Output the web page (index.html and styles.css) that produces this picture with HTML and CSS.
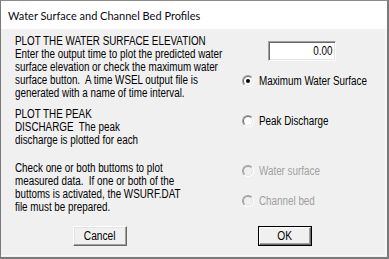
FILE: index.html
```html
<!DOCTYPE html>
<html>
<head>
<meta charset="utf-8">
<link rel="stylesheet" href="styles.css">
</head>
<body>
<div class="window">
  <div class="titlebar"><span class="title">Water Surface and Channel Bed Profiles</span></div>
  <div class="client">
    <div class="main">
      <div class="left">
        <p class="sec sec1">PLOT THE WATER SURFACE ELEVATION<br>Enter the output time to plot the predicted water<br>surface elevation or check the maximum water<br>surface button.&nbsp; A time WSEL output file is<br>generated with a name of time interval.</p>
        <p class="sec sec2">PLOT THE PEAK<br>DISCHARGE&nbsp; The peak<br>discharge is plotted for each</p>
        <p class="sec sec3">Check one or both buttoms to plot<br>measured data.&nbsp; If one or both of the<br>buttoms is activated, the WSURF.DAT<br>file must be prepared.</p>
      </div>
      <div class="right">
        <div class="field"><span class="field-text">0.00</span></div>
        <div class="opt opt-max"><span class="radio checked"><span class="radio-in"></span></span><span class="opt-label">Maximum Water Surface</span></div>
        <div class="opt opt-peak"><span class="radio"><span class="radio-in"></span></span><span class="opt-label">Peak Discharge</span></div>
        <div class="opt opt-water disabled"><span class="radio"><span class="radio-in"></span></span><span class="opt-label">Water surface</span></div>
        <div class="opt opt-bed disabled"><span class="radio"><span class="radio-in"></span></span><span class="opt-label">Channel bed</span></div>
      </div>
    </div>
    <div class="footer">
      <div class="btn"><span class="btn-text">Cancel</span></div>
      <div class="btn default"><span class="btn-in"><span class="btn-text">OK</span></span></div>
    </div>
  </div>
</div>
</body>
</html>
```
FILE: styles.css
```css
html, body {
  margin: 0;
  padding: 0;
  background: #f0f0f0;
}
.window {
  width: 389px;
  height: 259px;
  box-sizing: border-box;
  border-left: 1px solid #7a7a7a;
  border-top: 1px solid #8a8a8a;
  border-right: 2px solid #7a7a7a;
  border-bottom: 2px solid #7a7a7a;
  display: flex;
  flex-direction: column;
  background: #f0f0f0;
  overflow: hidden;
}
.titlebar {
  height: 28px;
  flex: none;
  background: #ffffff;
  display: flex;
  align-items: center;
  padding-left: 7px;
}
.title {
  font-family: Lato, "Noto Sans", sans-serif;
  font-size: 11px;
  color: #0a0a14;
}
.client {
  flex: 1;
  display: flex;
  flex-direction: column;
  font-family: "Liberation Sans", Arial, sans-serif;
  font-size: 12px;
  color: #000;
  border-right: 1px solid #fafafa;
  border-bottom: 1px solid #fafafa;
  margin-right: 1px;
  margin-bottom: 1px;
}
.main {
  flex: 1;
  display: grid;
  grid-template-columns: 241px 1fr;
}
.left {
  padding-left: 14px;
  padding-top: 6px;
}
.sec {
  margin: 0;
  line-height: 13px;
  white-space: nowrap;
  transform: scaleX(0.82);
  transform-origin: left top;
}
.sec2 { margin-top: 8px; }
.sec3 { margin-top: 15px; }
.right {
  display: flex;
  flex-direction: column;
  align-items: flex-start;
  padding-top: 12px;
}
.field {
  margin-left: 26px;
  width: 68px;
  height: 20px;
  box-sizing: border-box;
  background: #fff;
  border: 1px solid;
  border-color: #a0a0a0 #ffffff #ffffff #a0a0a0;
  box-shadow: inset 1px 1px 0 #696969, inset -1px -1px 0 #e3e3e3;
  display: flex;
  justify-content: flex-end;
  align-items: center;
  padding-right: 3px;
  white-space: nowrap;
}
.field-text {
  display: inline-block;
  transform: scaleX(0.82);
  transform-origin: right center;
}
.opt {
  display: flex;
  align-items: center;
  height: 16px;
  gap: 5px;
  white-space: nowrap;
}
.opt-label {
  display: inline-block;
  transform: scaleX(0.82);
  transform-origin: left center;
}
.opt-max { margin-top: 12px; }
.opt-peak { margin-top: 24px; }
.opt-water { margin-top: 34px; }
.opt-bed { margin-top: 14px; }
.radio {
  width: 12px;
  height: 12px;
  box-sizing: border-box;
  border-radius: 50%;
  border: 1px solid;
  border-color: #a0a0a0 #ffffff #ffffff #a0a0a0;
  display: flex;
  flex: none;
}
.radio-in {
  flex: 1;
  border-radius: 50%;
  border: 1px solid;
  border-color: #696969 #e3e3e3 #e3e3e3 #696969;
  background: #fff;
  display: flex;
  align-items: center;
  justify-content: center;
}
.checked .radio-in::after {
  content: "";
  width: 4px;
  height: 4px;
  border-radius: 50%;
  background: #000;
}
.disabled .radio-in {
  background: #f0f0f0;
  border-color: #a0a0a0 #e3e3e3 #e3e3e3 #a0a0a0;
}
.disabled .opt-label {
  color: #a0a0a0;
}
.footer {
  flex: none;
  display: flex;
  gap: 131px;
  padding-left: 72px;
  padding-bottom: 9px;
}
.btn {
  width: 54px;
  height: 20px;
  box-sizing: border-box;
  border: 1px solid;
  border-color: #ffffff #696969 #696969 #ffffff;
  box-shadow: inset -1px -1px 0 #a0a0a0, inset 1px 1px 0 #e3e3e3;
  display: flex;
  align-items: center;
  justify-content: center;
  background: #f0f0f0;
}
.btn-text {
  display: inline-block;
  transform: scaleX(0.85);
}
.btn.default {
  border: 1px solid #000;
  box-shadow: none;
}
.btn-in {
  flex: 1;
  align-self: stretch;
  display: flex;
  align-items: center;
  justify-content: center;
  border: 1px solid;
  border-color: #ffffff #696969 #696969 #ffffff;
  box-shadow: inset -1px -1px 0 #a0a0a0;
}
```
